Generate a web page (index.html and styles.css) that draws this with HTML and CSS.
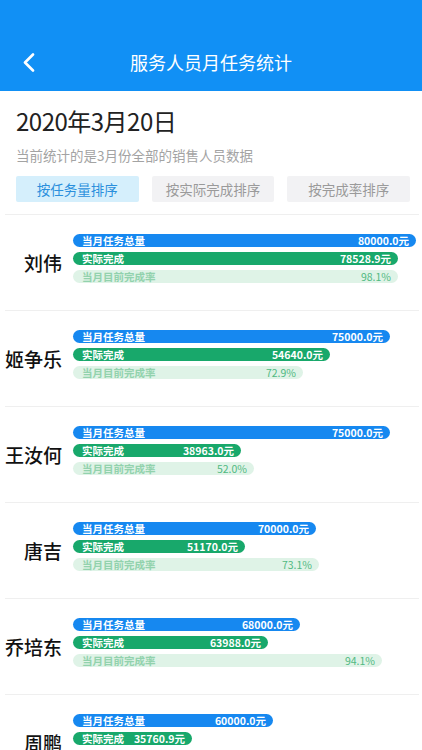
FILE: index.html
```html
<!DOCTYPE html>
<html lang="zh-CN">
<head>
    <meta charset="UTF-8">
    <meta name="viewport" content="width=device-width, initial-scale=1.0">
    <title>服务人员月任务统计</title>
    <link rel="stylesheet" href="styles.css">
</head>
<body>

<div class="header">
    <div class="nav">
        <a class="back" href="#">
            <svg width="13" height="19" viewBox="0 0 13 19">
                <path d="M11 1.5 L3 9.5 L11 17.5" fill="none" stroke="#fff" stroke-width="2.6" stroke-linecap="round" stroke-linejoin="round"/>
            </svg>
        </a>
        <h1 class="title">服务人员月任务统计</h1>
        <span></span>
    </div>
</div>

<div class="intro">
    <h2 class="date">2020年3月20日</h2>
    <p class="desc">当前统计的是3月份全部的销售人员数据</p>
    <div class="sorts">
        <button class="sort active">按任务量排序</button>
        <button class="sort">按实际完成排序</button>
        <button class="sort">按完成率排序</button>
    </div>
</div>

<div class="list">
    <div class="row">
        <div class="name">刘伟</div>
        <div class="bars">
            <div class="bar total" style="width:343px"><span>当月任务总量</span><span>80000.0元</span></div>
            <div class="bar done" style="width:325px"><span>实际完成</span><span>78528.9元</span></div>
            <div class="bar rate" style="width:325px"><span>当月目前完成率</span><span>98.1%</span></div>
        </div>
    </div>
    <div class="row">
        <div class="name">姬争乐</div>
        <div class="bars">
            <div class="bar total" style="width:317px"><span>当月任务总量</span><span>75000.0元</span></div>
            <div class="bar done" style="width:257px"><span>实际完成</span><span>54640.0元</span></div>
            <div class="bar rate" style="width:230px"><span>当月目前完成率</span><span>72.9%</span></div>
        </div>
    </div>
    <div class="row">
        <div class="name">王汝何</div>
        <div class="bars">
            <div class="bar total" style="width:317px"><span>当月任务总量</span><span>75000.0元</span></div>
            <div class="bar done" style="width:168px"><span>实际完成</span><span>38963.0元</span></div>
            <div class="bar rate" style="width:181px"><span>当月目前完成率</span><span>52.0%</span></div>
        </div>
    </div>
    <div class="row">
        <div class="name">唐吉</div>
        <div class="bars">
            <div class="bar total" style="width:243px"><span>当月任务总量</span><span>70000.0元</span></div>
            <div class="bar done" style="width:172px"><span>实际完成</span><span>51170.0元</span></div>
            <div class="bar rate" style="width:246px"><span>当月目前完成率</span><span>73.1%</span></div>
        </div>
    </div>
    <div class="row">
        <div class="name">乔培东</div>
        <div class="bars">
            <div class="bar total" style="width:227px"><span>当月任务总量</span><span>68000.0元</span></div>
            <div class="bar done" style="width:195px"><span>实际完成</span><span>63988.0元</span></div>
            <div class="bar rate" style="width:309px"><span>当月目前完成率</span><span>94.1%</span></div>
        </div>
    </div>
    <div class="row">
        <div class="name">周鹏</div>
        <div class="bars">
            <div class="bar total" style="width:200px"><span>当月任务总量</span><span>60000.0元</span></div>
            <div class="bar done" style="width:119px"><span>实际完成</span><span>35760.9元</span></div>
            <div class="bar rate" style="width:200px"><span>当月目前完成率</span><span>59.6%</span></div>
        </div>
    </div>
</div>

</body>
</html>
```

FILE: styles.css
```css
body{
    margin: 0;
    background-color: #fff;
    font-family: "Noto Sans CJK SC", "Noto Sans", sans-serif;
    color: #222;
}

.header{
    height: 91px;
    background-color: #1190f5;
    padding-top: 33px;
    box-sizing: border-box;
}

.nav{
    height: 58px;
    display: grid;
    grid-template-columns: 1fr auto 1fr;
    align-items: center;
}

.back{
    display: flex;
    padding-left: 22px;
}

.title{
    margin: 0;
    font-size: 18px;
    font-weight: normal;
    color: #fff;
}

.intro{
    padding: 14px 12px 12px 16px;
}

.date{
    margin: 0;
    font-size: 24px;
    line-height: 32px;
    font-weight: normal;
    letter-spacing: -0.5px;
    color: #222;
}

.desc{
    margin: 8px 0 0 0;
    font-size: 13.5px;
    line-height: 20px;
    color: #a3a3a3;
}

.sorts{
    margin-top: 11px;
    display: grid;
    grid-template-columns: repeat(3, 1fr);
    gap: 13px;
}

.sort{
    height: 26px;
    border: none;
    border-radius: 2px;
    background-color: #f2f2f4;
    color: #9a9a9a;
    font-family: inherit;
    font-size: 13.5px;
    padding: 0;
}

.sort.active{
    background-color: #d5effc;
    color: #2b8fdc;
}

.row{
    display: flex;
    margin: 0 3px 0 5px;
    height: 96px;
    box-sizing: border-box;
    border-top: 1px solid #efefef;
}

.name{
    width: 57px;
    align-self: center;
    text-align: right;
    font-size: 19px;
    font-weight: 500;
    color: #111;
}

.bars{
    margin-left: 11px;
    padding-top: 19px;
    display: flex;
    flex-direction: column;
    gap: 5px;
}

.bar{
    height: 13px;
    box-sizing: border-box;
    border-radius: 7px;
    padding: 0 7px 0 9px;
    display: flex;
    justify-content: space-between;
    align-items: center;
    font-size: 10.5px;
    line-height: 13px;
    font-weight: bold;
    white-space: nowrap;
}

.bar.total{
    background-color: #1688f0;
    color: #fff;
}

.bar.done{
    background-color: #18a86b;
    color: #fff;
}

.bar.rate{
    background-color: #dff3e7;
    color: #92d2ad;
}

.bar.rate span:last-child{
    color: #50b982;
    font-weight: normal;
}
```
